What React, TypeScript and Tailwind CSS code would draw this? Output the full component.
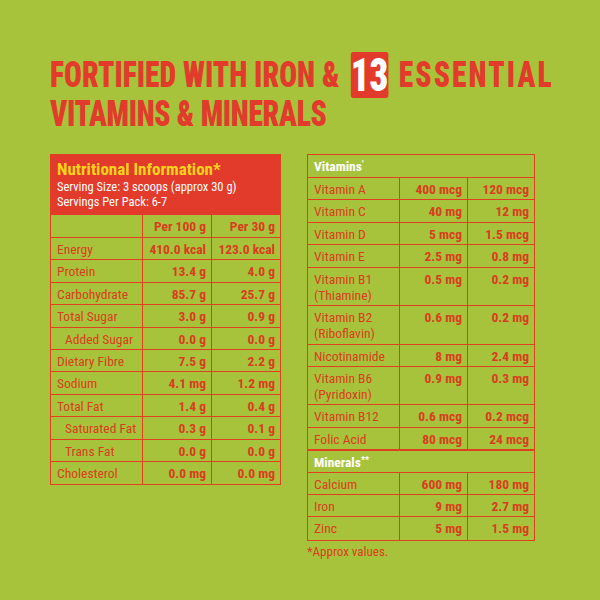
import React from "react";

const RED = "text-[#d93d1f]";

type Row = { label: string; sub?: string; a: string; b: string; indent?: boolean };

const nutrition: Row[] = [
  { label: "Energy", a: "410.0 kcal", b: "123.0 kcal" },
  { label: "Protein", a: "13.4 g", b: "4.0 g" },
  { label: "Carbohydrate", a: "85.7 g", b: "25.7 g" },
  { label: "Total Sugar", a: "3.0 g", b: "0.9 g" },
  { label: "Added Sugar", a: "0.0 g", b: "0.0 g", indent: true },
  { label: "Dietary Fibre", a: "7.5 g", b: "2.2 g" },
  { label: "Sodium", a: "4.1 mg", b: "1.2 mg" },
  { label: "Total Fat", a: "1.4 g", b: "0.4 g" },
  { label: "Saturated Fat", a: "0.3 g", b: "0.1 g", indent: true },
  { label: "Trans Fat", a: "0.0 g", b: "0.0 g", indent: true },
  { label: "Cholesterol", a: "0.0 mg", b: "0.0 mg" },
];

const vitamins: Row[] = [
  { label: "Vitamin A", a: "400 mcg", b: "120 mcg" },
  { label: "Vitamin C", a: "40 mg", b: "12 mg" },
  { label: "Vitamin D", a: "5 mcg", b: "1.5 mcg" },
  { label: "Vitamin E", a: "2.5 mg", b: "0.8 mg" },
  { label: "Vitamin B1", sub: "(Thiamine)", a: "0.5 mg", b: "0.2 mg" },
  { label: "Vitamin B2", sub: "(Riboflavin)", a: "0.6 mg", b: "0.2 mg" },
  { label: "Nicotinamide", a: "8 mg", b: "2.4 mg" },
  { label: "Vitamin B6", sub: "(Pyridoxin)", a: "0.9 mg", b: "0.3 mg" },
  { label: "Vitamin B12", a: "0.6 mcg", b: "0.2 mcg" },
  { label: "Folic Acid", a: "80 mcg", b: "24 mcg" },
];

const minerals: Row[] = [
  { label: "Calcium", a: "600 mg", b: "180 mg" },
  { label: "Iron", a: "9 mg", b: "2.7 mg" },
  { label: "Zinc", a: "5 mg", b: "1.5 mg" },
];

const font = { fontFamily: '"Roboto Condensed", "Liberation Sans Narrow", "DejaVu Sans Condensed", sans-serif' };

function DataRow({ row, cols }: { row: Row; cols: string }) {
  const tall = !!row.sub;
  return (
    <div className={`grid ${cols} border-b border-[#e0401f] last:border-b-0 ${tall ? "h-[38.5px]" : "h-[22.4px]"}`}>
      <div className={`border-r border-[#e0401f] ${row.indent ? "pl-[14px]" : "pl-[6px]"} pt-[3px] text-[13.5px] leading-[16px] ${RED}`}>
        {row.label}
        {row.sub && <div>{row.sub}</div>}
      </div>
      <div className={`border-r border-[#e0401f] pr-[5px] pt-[3px] text-right text-[13.5px] leading-[16px] font-bold ${RED}`}>
        {row.a}
      </div>
      <div className={`pr-[5px] pt-[3px] text-right text-[13.5px] leading-[16px] font-bold ${RED}`}>{row.b}</div>
    </div>
  );
}

export default function App() {
  return (
    <div className="w-[600px] h-[600px] bg-[#a7c33b] overflow-hidden" style={font}>
      {/* headline, squeezed to match the condensed display face */}
      <div className="pl-[50px] pt-[52px] h-[154px]">
        <div className="origin-left scale-x-[0.8] whitespace-nowrap text-[#e23b2b] font-black uppercase text-[37px] leading-[32px]">
          <div className="flex items-center h-[46px]">
            <span>Fortified with Iron &amp;</span>
            <span className="ml-[14px] w-[56px] h-[46px] bg-[#e23b2b] rounded-[3px] text-white text-[46px] flex items-center justify-center">
              13
            </span>
            <span className="ml-[13px] tracking-[2.6px]">Essential</span>
          </div>
          <div className="tracking-[-0.4px]">Vitamins &amp; Minerals</div>
        </div>
      </div>

      <div className="flex items-start pl-[50px] gap-[26px]">
        {/* left table */}
        <div className="w-[231px] border-[1.5px] border-[#e0401f]">
          <div className="bg-[#e23b2b] h-[60px] pl-[6px] pt-[4px]">
            <div className="text-[#fbd31c] font-bold text-[17px] leading-[20px]">Nutritional Information*</div>
            <div className="text-white text-[12.5px] leading-[15px]">Serving Size: 3 scoops (approx 30 g)</div>
            <div className="text-white text-[12.5px] leading-[15px]">Servings Per Pack: 6-7</div>
          </div>
          <div className="grid grid-cols-[92px_69px_1fr] border-b border-[#e0401f] h-[23px]">
            <div className="border-r border-[#e0401f]" />
            <div className={`border-r border-[#e0401f] pr-[5px] pt-[3px] text-right text-[13.5px] leading-[16px] font-bold ${RED}`}>
              Per 100 g
            </div>
            <div className={`pr-[5px] pt-[3px] text-right text-[13.5px] leading-[16px] font-bold ${RED}`}>Per 30 g</div>
          </div>
          {nutrition.map((r) => (
            <DataRow key={r.label} row={r} cols="grid-cols-[92px_69px_1fr]" />
          ))}
        </div>

        {/* right table */}
        <div>
          <div className="w-[228px] border-[1.5px] border-[#e0401f]">
            <div className="h-[23px] border-b border-[#e0401f] pl-[6px] pt-[3px] text-white font-bold text-[13.5px] leading-[16px]">
              Vitamins<sup className="text-[9px]">'</sup>
            </div>
            {vitamins.map((r) => (
              <DataRow key={r.label} row={r} cols="grid-cols-[92px_68px_1fr]" />
            ))}
            <div className="h-[22.4px] border-t border-b border-[#e0401f] pl-[6px] pt-[3px] text-white font-bold text-[13.5px] leading-[16px]">
              Minerals<sup className="text-[9px]">**</sup>
            </div>
            {minerals.map((r) => (
              <DataRow key={r.label} row={r} cols="grid-cols-[92px_68px_1fr]" />
            ))}
          </div>
          <div className={`pt-[1px] text-[13px] ${RED}`}>*Approx values.</div>
        </div>
      </div>
    </div>
  );
}
